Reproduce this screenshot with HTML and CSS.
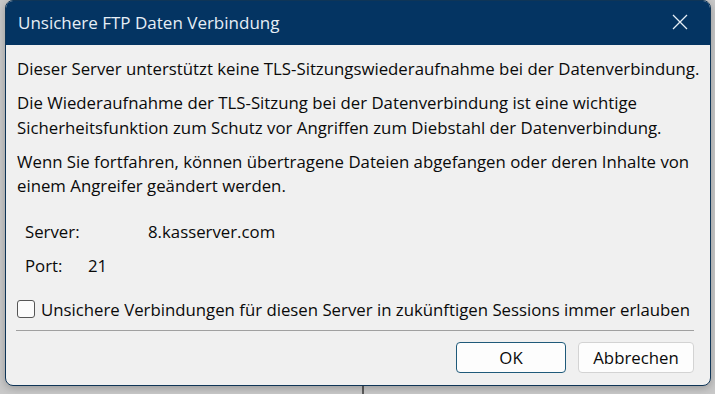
FILE: index.html
```html
<!DOCTYPE html>
<html lang="de">
<head>
  <meta charset="UTF-8">
  <link rel="stylesheet" href="styles.css">
  <title>Unsichere FTP Daten Verbindung</title>
</head>
<body>
  <div class="backdrop-line"></div>

  <div class="dialog">
    <div class="titlebar">
      <span class="title">Unsichere FTP Daten Verbindung</span>
      <svg class="close" width="16" height="16" viewBox="0 0 16 16">
        <path d="M1 1 L15 15 M15 1 L1 15" stroke="#e6eef6" stroke-width="1.3" fill="none"/>
      </svg>
    </div>

    <div class="content">
      <p>Dieser Server unterstützt keine TLS-Sitzungswiederaufnahme bei der Datenverbindung.</p>
      <p>Die Wiederaufnahme der TLS-Sitzung bei der Datenverbindung ist eine wichtige Sicherheitsfunktion zum Schutz vor Angriffen zum Diebstahl der Datenverbindung.</p>
      <p>Wenn Sie fortfahren, können übertragene Dateien abgefangen oder deren Inhalte von einem Angreifer geändert werden.</p>

      <div class="details">
        <div class="row">
          <span class="label">Server:</span>
          <span class="value server">8.kasserver.com</span>
        </div>
        <div class="row">
          <span class="label">Port:</span>
          <span class="value port">21</span>
        </div>
      </div>

      <label class="check">
        <span class="box"></span>
        Unsichere Verbindungen für diesen Server in zukünftigen Sessions immer erlauben
      </label>

      <div class="buttons">
        <button class="btn default">OK</button>
        <button class="btn">Abbrechen</button>
      </div>
    </div>
  </div>
</body>
</html>
```

FILE: styles.css
```css
body {
  margin: 0;
  width: 715px;
  height: 394px;
  background-color: #c9c9c9;
  font-family: 'Open Sans', 'Noto Sans', sans-serif;
  overflow: hidden;
  position: relative;
}

.backdrop-line {
  position: absolute;
  left: 362px;
  top: 380px;
  width: 2px;
  height: 14px;
  background-color: #5c5c5c;
}

.dialog {
  position: absolute;
  left: 5px;
  top: 0;
  width: 704px;
  height: 384px;
  background-color: #f0f0f0;
  border: 1px solid #0f3557;
  border-radius: 8px;
  overflow: hidden;
  box-shadow: 0 2px 8px rgba(0, 0, 0, 0.25);
}

.titlebar {
  height: 44px;
  background-color: #043462;
  display: flex;
  align-items: center;
  justify-content: space-between;
  padding: 0 22px 0 12px;
}

.title {
  color: #e6eef6;
  font-size: 17px;
  margin-top: -2px;
}

.close {
  margin-top: -2px;
}

.content {
  padding: 12px 10px 0 11px;
  font-size: 16.8px;
  color: #0a0a0a;
}

.content p {
  margin: 0 -6px 9.5px 0;
  line-height: 24.5px;
}

.details {
  padding: 12px 0 0 8px;
}

.row {
  display: flex;
  height: 34px;
  line-height: 24px;
}

.label {
  width: 63px;
}

.server {
  margin-left: 60px;
}

.check {
  display: flex;
  align-items: center;
  gap: 6px;
  margin-top: 9px;
  height: 24px;
}

.box {
  width: 16px;
  height: 16px;
  border: 1px solid #555;
  border-radius: 3px;
  background-color: #fbfbfb;
}

.buttons {
  margin: 9px 6px 0 -1px;
  border-top: 1px solid #a0a0a0;
  padding-top: 11px;
  display: flex;
  justify-content: flex-end;
  gap: 12px;
}

.btn {
  height: 31px;
  width: 110px;
  font-family: inherit;
  font-size: 16.8px;
  color: #0a0a0a;
  background-color: #fdfdfd;
  border: 1px solid #d3d3d3;
  border-radius: 4px;
}

.btn.default {
  border-color: #1f5a7a;
}

.btn:last-child {
  width: 116px;
}
```
